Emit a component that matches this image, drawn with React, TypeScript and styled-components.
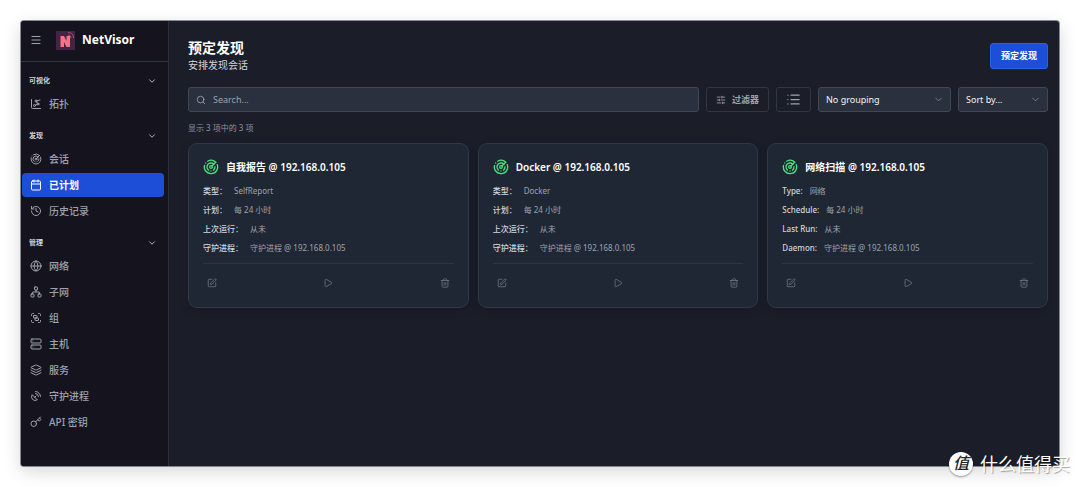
import React from 'react';
import styled, { createGlobalStyle } from 'styled-components';
import {
  Calendar, ChartNetwork, ChevronDown, Globe, Group, History, Key, Layers, List, Menu,
  Network, Play, Radar, SatelliteDish, Search, Server, SlidersHorizontal, SquarePen, Trash2,
  type LucideIcon,
} from 'lucide-react';

const GlobalStyle = createGlobalStyle`
  * { box-sizing: border-box; }
  body {
    margin: 0;
    background: #fff;
    font-family: "Noto Sans", "Noto Sans CJK SC", sans-serif;
    font-size: 10px;
    line-height: 14px;
  }
  h1, h2, h3, p, ul, dl, dd { margin: 0; padding: 0; }
  ul { list-style: none; }
  button, input, select { font: inherit; }
  svg { flex: none; display: block; }
`;

const Page = styled.div`
  position: relative;
  min-height: 100vh;
  padding: 21px;
  display: flex;
`;

const Window = styled.div`
  flex: 1;
  min-width: 0;
  display: flex;
  border-radius: 3px;
  overflow: hidden;
  background: #1b1d29;
  box-shadow: 0 0 0 1px rgba(90, 95, 105, 0.7), 0 5px 18px rgba(0, 0, 0, 0.17);
`;

const Sidebar = styled.aside`
  flex: none;
  width: 148px;
  background: #15131d;
  border-right: 1px solid #2a303e;
`;

const Brand = styled.div`
  display: flex;
  align-items: center;
  height: 41px;
  padding: 0 9px 2px;
  border-bottom: 1px solid #2c3240;
  color: #fff;
  font-size: 12px;
  font-weight: 700;
`;

const MenuButton = styled.button`
  display: flex;
  padding: 0;
  margin-right: 14px;
  border: 0;
  background: none;
  color: #9ca3af;
`;

const BrandName = styled.span`
  margin-left: 7px;
`;

const Nav = styled.nav`
  display: flex;
  flex-direction: column;
  gap: 9px;
  padding: 8px 4px 12px 1px;
`;

const SectionToggle = styled.button`
  display: flex;
  align-items: center;
  justify-content: space-between;
  width: 100%;
  height: 22px;
  padding: 0 7px;
  border: 0;
  background: none;
  color: #d1d5db;
  font-size: 7px;
  font-weight: 700;
`;

const NavList = styled.ul`
  display: flex;
  flex-direction: column;
  gap: 2px;
`;

const NavLink = styled.a<{ $active?: boolean }>`
  display: flex;
  align-items: center;
  gap: 7px;
  height: 24px;
  padding: 0 8px;
  border-radius: 4px;
  background: ${p => (p.$active ? '#1d4ed8' : 'transparent')};
  color: ${p => (p.$active ? '#fff' : '#9ca3af')};
  font-weight: ${p => (p.$active ? 600 : 500)};
  text-decoration: none;
`;

const Main = styled.main`
  flex: 1;
  min-width: 0;
  padding: 17px 11px 20px 19px;
`;

const PageHeader = styled.header`
  display: flex;
  align-items: center;
  justify-content: space-between;
  margin-bottom: 14px;
`;

const Title = styled.h1`
  color: #fff;
  font-size: 14px;
  line-height: 20px;
  font-weight: 700;
`;

const Subtitle = styled.p`
  color: #d1d5db;
  line-height: 15px;
`;

const PrimaryButton = styled.button`
  height: 26px;
  padding: 0 10px;
  border: 1px solid #2563eb;
  border-radius: 3px;
  background: #1d4ed8;
  color: #fff;
  font-size: 9px;
  font-weight: 600;
`;

const Toolbar = styled.div`
  display: flex;
  gap: 7px;
  height: 25px;
`;

const SearchBox = styled.label`
  flex: 1;
  min-width: 0;
  display: flex;
  align-items: center;
  gap: 7px;
  padding: 0 7px;
  border: 1px solid #404856;
  border-radius: 3px;
  background: #2a303d;
  color: #9ca3af;
`;

const SearchInput = styled.input`
  flex: 1;
  min-width: 0;
  padding: 0;
  border: 0;
  outline: 0;
  background: none;
  color: #fff;
  font-size: 9px;
  &::placeholder { color: #9ca3af; opacity: 1; }
`;

const ToolButton = styled.button`
  display: flex;
  align-items: center;
  gap: 6px;
  padding: 0 9px;
  border: 1px solid #303744;
  border-radius: 3px;
  background: none;
  color: #9ca3af;
  font-size: 9px;
  font-weight: 600;
`;

const SelectWrap = styled.div<{ $width: number }>`
  flex: none;
  width: ${p => p.$width}px;
  display: grid;
  align-items: center;
  color: #7b8493;
  & > * { grid-area: 1 / 1; }
  & > svg { justify-self: end; margin-right: 7px; pointer-events: none; }
`;

const Select = styled.select`
  appearance: none;
  width: 100%;
  height: 25px;
  padding: 0 20px 0 7px;
  border: 1px solid #404856;
  border-radius: 3px;
  background: #2a303d;
  color: #f3f4f6;
  font-size: 9px;
`;

const Count = styled.p`
  margin: 9px 0 8px;
  color: #8b93a0;
  font-size: 8px;
`;

const CardGrid = styled.div`
  display: grid;
  grid-template-columns: repeat(3, minmax(0, 1fr));
  gap: 9px;
`;

const Card = styled.article`
  padding: 14px 14px 5px;
  border: 1px solid #2f3947;
  border-radius: 9px;
  background: #1f2735;
  box-shadow: 0 3px 8px rgba(0, 0, 0, 0.15);
`;

const CardHead = styled.div`
  display: flex;
  align-items: center;
  gap: 7px;
  margin-bottom: 8px;
  color: #4ade80;
`;

const CardTitle = styled.h2`
  color: #fff;
  font-size: 10px;
  line-height: 18px;
  font-weight: 600;
`;

const Fields = styled.dl`
  display: flex;
  flex-direction: column;
  gap: 5px;
  padding-bottom: 8px;
  border-bottom: 1px solid #2c3544;
  font-size: 8px;
`;

const Field = styled.div`
  display: flex;
  gap: 7px;
`;

const FieldName = styled.dt`
  color: #d1d5db;
  font-weight: 500;
`;

const FieldValue = styled.dd`
  color: #9ca3af;
`;

const Actions = styled.div`
  display: flex;
  justify-content: space-between;
  padding: 10px 0;
`;

const IconButton = styled.button`
  display: flex;
  padding: 4px;
  border: 0;
  background: none;
  color: #6b7482;
`;

const Watermark = styled.div`
  position: absolute;
  right: 10px;
  bottom: 10px;
  display: flex;
  align-items: center;
  gap: 7px;
  color: #fff;
  font-size: 18px;
  line-height: 26px;
  text-shadow: 1px 1px 1px rgba(0, 0, 0, 0.35);
`;

const Seal = styled.span`
  width: 24px;
  height: 24px;
  border-radius: 50%;
  background: #fff;
  box-shadow: 0 1px 2px rgba(0, 0, 0, 0.4);
  color: #222;
  font-size: 16px;
  font-weight: 500;
  font-style: italic;
  line-height: 23px;
  text-align: center;
  text-shadow: none;
`;

type NavEntry = { label: string; icon: LucideIcon; active?: boolean };

const sections: { title: string; items: NavEntry[] }[] = [
  { title: '可视化', items: [{ label: '拓扑', icon: ChartNetwork }] },
  {
    title: '发现',
    items: [
      { label: '会话', icon: Radar },
      { label: '已计划', icon: Calendar, active: true },
      { label: '历史记录', icon: History },
    ],
  },
  {
    title: '管理',
    items: [
      { label: '网络', icon: Globe },
      { label: '子网', icon: Network },
      { label: '组', icon: Group },
      { label: '主机', icon: Server },
      { label: '服务', icon: Layers },
      { label: '守护进程', icon: SatelliteDish },
      { label: 'API 密钥', icon: Key },
    ],
  },
];

const zh = ['类型：', '计划：', '上次运行：', '守护进程：'];
const en = ['Type:', 'Schedule:', 'Last Run:', 'Daemon:'];

const cards = [
  { name: '自我报告', type: 'SelfReport', labels: zh },
  { name: 'Docker', type: 'Docker', labels: zh },
  { name: '网络扫描', type: '网络', labels: en },
];

const host = '192.168.0.105';

function Logo() {
  return (
    <svg width="19" height="19" viewBox="0 0 19 19" aria-hidden="true">
      <rect width="19" height="19" fill="#412544" />
      <path d="M4.500 5H8l2.500 5V5H14v11h-3.500L8 11v5H4.500z" fill="#fb7185" />
      <path d="M12 4q3 0 3 3M12 1.500q5.500 0 5.500 5.500" fill="none" stroke="#a8506c" strokeWidth="1" />
    </svg>
  );
}

function DiscoveryCard({ name, type, labels }: (typeof cards)[number]) {
  const values = [type, '每 24 小时', '从未', `守护进程 @ ${host}`];
  return (
    <Card>
      <CardHead>
        <Radar size={16} />
        <CardTitle>{name} @ {host}</CardTitle>
      </CardHead>
      <Fields>
        {labels.map((label, i) => (
          <Field key={label}>
            <FieldName>{label}</FieldName>
            <FieldValue>{values[i]}</FieldValue>
          </Field>
        ))}
      </Fields>
      <Actions>
        <IconButton aria-label="Edit"><SquarePen size={10} /></IconButton>
        <IconButton aria-label="Run"><Play size={10} /></IconButton>
        <IconButton aria-label="Delete"><Trash2 size={10} /></IconButton>
      </Actions>
    </Card>
  );
}

export default function App() {
  return (
    <Page lang="zh-CN">
      <GlobalStyle />
      <Window>
        <Sidebar>
          <Brand>
            <MenuButton aria-label="Menu"><Menu size={12} /></MenuButton>
            <Logo />
            <BrandName>NetVisor</BrandName>
          </Brand>
          <Nav>
            {sections.map(section => (
              <section key={section.title}>
                <SectionToggle>
                  {section.title}
                  <ChevronDown size={10} />
                </SectionToggle>
                <NavList>
                  {section.items.map(({ label, icon: Icon, active }) => (
                    <li key={label}>
                      <NavLink href="#" $active={active}>
                        <Icon size={12} />
                        {label}
                      </NavLink>
                    </li>
                  ))}
                </NavList>
              </section>
            ))}
          </Nav>
        </Sidebar>
        <Main>
          <PageHeader>
            <div>
              <Title>预定发现</Title>
              <Subtitle>安排发现会话</Subtitle>
            </div>
            <PrimaryButton>预定发现</PrimaryButton>
          </PageHeader>
          <Toolbar>
            <SearchBox>
              <Search size={10} />
              <SearchInput type="text" placeholder="Search..." aria-label="Search" />
            </SearchBox>
            <ToolButton><SlidersHorizontal size={10} />过滤器</ToolButton>
            <ToolButton aria-label="List view"><List size={15} /></ToolButton>
            <SelectWrap $width={133}>
              <Select aria-label="Grouping"><option>No grouping</option></Select>
              <ChevronDown size={11} />
            </SelectWrap>
            <SelectWrap $width={90}>
              <Select aria-label="Sort"><option>Sort by...</option></Select>
              <ChevronDown size={11} />
            </SelectWrap>
          </Toolbar>
          <Count>显示 3 项中的 3 项</Count>
          <CardGrid>
            {cards.map(card => <DiscoveryCard key={card.name} {...card} />)}
          </CardGrid>
        </Main>
      </Window>
      <Watermark>
        <Seal>值</Seal>
        什么值得买
      </Watermark>
    </Page>
  );
}
